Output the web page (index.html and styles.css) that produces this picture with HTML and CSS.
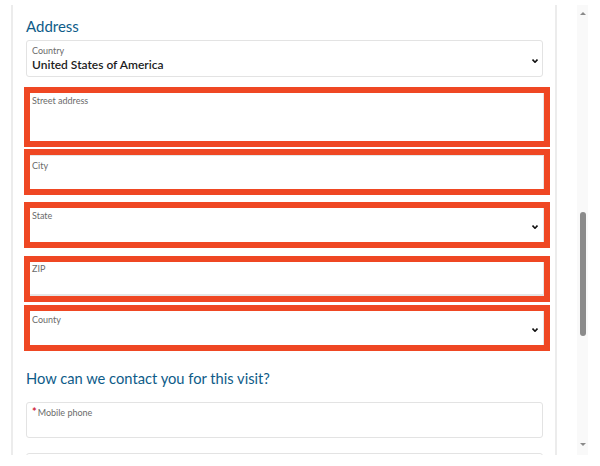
FILE: index.html
```html
<!DOCTYPE html>
<html lang="en">
<head>
<meta charset="utf-8">
<title>Address form</title>
<link rel="stylesheet" href="styles.css">
</head>
<body>
<div class="page">
  <div class="panel">
    <h2 class="heading heading-address">Address</h2>
    <div class="field select-field country">
      <span class="label">Country</span>
      <span class="value">United States of America</span>
      <span class="chev"><svg width="6" height="4" viewBox="0 0 6 4"><path d="M0.5 0.5 L3 3.2 L5.5 0.5" fill="none" stroke="#111" stroke-width="1.6"/></svg></span>
    </div>

    <div class="hl hl-street">
      <div class="inner inner-street"><span class="label">Street address</span></div>
    </div>
    <div class="hl hl-city">
      <div class="inner inner-city"><span class="label">City</span></div>
    </div>
    <div class="hl hl-state">
      <div class="inner inner-state select-inner"><span class="label">State</span>
        <span class="chev"><svg width="6" height="4" viewBox="0 0 6 4"><path d="M0.5 0.5 L3 3.2 L5.5 0.5" fill="none" stroke="#111" stroke-width="1.6"/></svg></span>
      </div>
    </div>
    <div class="hl hl-zip">
      <div class="inner inner-zip"><span class="label">ZIP</span></div>
    </div>
    <div class="hl hl-county">
      <div class="inner inner-county select-inner"><span class="label">County</span>
        <span class="chev"><svg width="6" height="4" viewBox="0 0 6 4"><path d="M0.5 0.5 L3 3.2 L5.5 0.5" fill="none" stroke="#111" stroke-width="1.6"/></svg></span>
      </div>
    </div>

    <h2 class="heading heading-contact">How can we contact you for this visit?</h2>
    <div class="field phone">
      <span class="label"><span class="req">*</span>Mobile phone</span>
    </div>
    <div class="field next"></div>
  </div>
  <div class="scroll">
    <span class="arrow up"></span>
    <span class="thumb"></span>
    <span class="arrow down"></span>
  </div>
</div>
</body>
</html>
```

FILE: styles.css
```css
html, body {
  margin: 0;
  padding: 0;
  background: #fff;
}
body {
  font-family: Lato, "Open Sans", sans-serif;
  color: #222;
}
.page {
  display: flex;
  align-items: flex-start;
  padding: 5px 0 0 11px;
  height: 461px;
  box-sizing: border-box;
}
.panel {
  flex-shrink: 0;
  width: 546px;
  height: 450px;
  box-sizing: border-box;
  border-left: 2px solid #ececec;
  border-right: 2px solid #ececec;
  padding: 0 12px 0 13px;
  overflow: hidden;
}
.heading {
  margin: 0;
  font-weight: 400;
  color: #0e5c89;
  font-size: 15px;
  line-height: 20px;
}
.heading-address {
  margin-top: 11px;
}
.heading-contact {
  margin-top: 17px;
  font-size: 14.7px;
}
.field {
  position: relative;
  border: 1px solid #e3e3e3;
  border-radius: 3px;
  box-sizing: border-box;
  background: #fff;
}
.label {
  display: block;
  font-size: 9px;
  line-height: 11px;
  color: #6b6b6b;
}
.country {
  margin-top: 4px;
  height: 37px;
  padding: 4px 0 0 5px;
}
.value {
  display: block;
  font-size: 12px;
  line-height: 16px;
  font-weight: 600;
  color: #1d1d1d;
  margin-top: 1px;
}
.chev {
  position: absolute;
  right: 4px;
  top: 16px;
  line-height: 0;
}
.hl {
  border: 6px solid #ef4723;
  margin-left: -2px;
  width: 526px;
  box-sizing: border-box;
  background: #fff;
}
.inner {
  position: relative;
  box-sizing: border-box;
  padding-left: 2px;
  border-right: 1px solid #e6e6e6;
}
.hl-street { margin-top: 10px; height: 60px; }
.hl-city { margin-top: 2px; height: 46px; }
.hl-state { margin-top: 7px; height: 46px; }
.hl-zip { margin-top: 8px; height: 46px; }
.hl-county { margin-top: 3px; height: 46px; }
.inner-street { height: 48px; padding-top: 2px; }
.inner-city { height: 34px; padding-top: 4px; border-top: 1px solid #e6e6e6; }
.inner-state { height: 34px; padding-top: 2px; }
.inner-zip { height: 34px; padding-top: 1px; border-bottom: 2px solid #e6e6e6; }
.inner-county { height: 34px; padding-top: 3px; }
.select-inner .chev {
  top: 15px;
  right: 5px;
}
.phone {
  margin-top: 14px;
  height: 36px;
  padding: 3px 0 0 5px;
}
.req {
  color: #d0243a;
  font-size: 11px;
  margin-right: 1px;
  font-weight: 700;
}
.next {
  margin-top: 15px;
  height: 36px;
}
.scroll {
  flex-shrink: 0;
  margin-left: 20px;
  width: 11px;
  height: 450px;
  background: #f9f9f9;
  display: flex;
  flex-direction: column;
  align-items: center;
  box-sizing: border-box;
  padding: 7px 0 9px;
}
.arrow {
  width: 0;
  height: 0;
  border-left: 3px solid transparent;
  border-right: 3px solid transparent;
}
.up {
  border-bottom: 3px solid #8a8a8a;
}
.down {
  border-top: 3px solid #8a8a8a;
  margin-top: auto;
}
.thumb {
  width: 6px;
  height: 124px;
  background: #8b8b8b;
  border-radius: 3px;
  margin-top: 197px;
}
```
